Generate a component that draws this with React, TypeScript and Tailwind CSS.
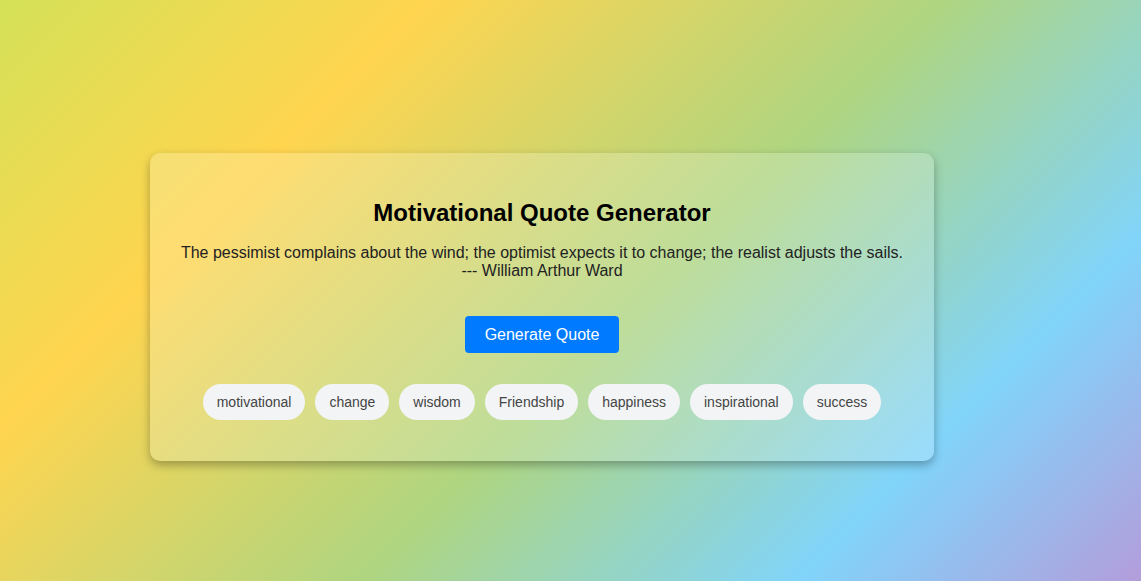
const tags = ["motivational", "change", "wisdom", "Friendship", "happiness", "inspirational", "success"];

export default function App() {
  return (
    <div
      className="w-[1141px] h-[581px] overflow-hidden bg-[linear-gradient(135deg,#d4e157_0%,#ffd54f_25%,#aed581_55%,#81d4fa_80%,#b39ddb_100%)] pt-[153px] pl-[150px]"
      style={{ fontFamily: '"Liberation Sans", Arial, sans-serif' }}
    >
      <div className="w-[784px] h-[308px] rounded-[10px] bg-white/20 shadow-[0_4px_10px_rgba(0,0,0,0.3)] flex flex-col items-center pt-[46px] text-center">
        <h1 className="text-[24px] leading-[28px] font-bold text-black">Motivational Quote Generator</h1>
        <p className="mt-[17px] text-[16px] leading-[18px] text-[#222]">
          The pessimist complains about the wind; the optimist expects it to change; the realist adjusts the sails.
          <br />
          --- William Arthur Ward
        </p>
        <button className="mt-[36px] h-[37px] w-[154px] rounded-[4px] bg-[#007bff] text-white text-[16px]">
          Generate Quote
        </button>
        <div className="mt-[31px] flex gap-[10px]">
          {tags.map((t) => (
            <span key={t} className="h-[36px] px-[14px] flex items-center rounded-full bg-[#f3f4f6] text-[14px] text-[#444]">
              {t}
            </span>
          ))}
        </div>
      </div>
    </div>
  );
}
